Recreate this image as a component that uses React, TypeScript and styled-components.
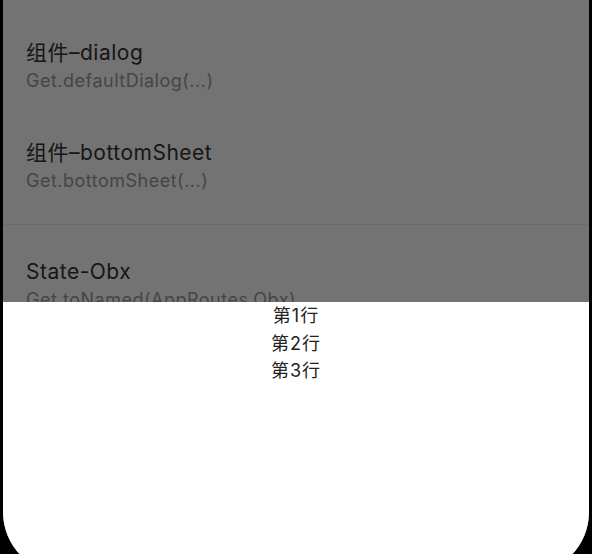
import React from "react";
import styled, { createGlobalStyle } from "styled-components";

const Global = createGlobalStyle`
  html, body {
    margin: 0;
    padding: 0;
    background: #000;
    overflow: hidden;
  }
  body {
    font-family: "Inter", "Noto Sans CJK SC", sans-serif;
  }
`;

const Screen = styled.div`
  position: relative;
  margin: 0 3px;
  height: 574px;
  background: #fff;
  border-radius: 0 0 62px 62px;
  overflow: hidden;
`;

const Section = styled.div<{ $top: number; $bottom: number }>`
  display: flex;
  flex-direction: column;
  padding-top: ${(p) => p.$top}px;
  padding-bottom: ${(p) => p.$bottom}px;
`;

const Item = styled.div`
  display: flex;
  flex-direction: column;
  height: 100px;
  box-sizing: border-box;
  padding: 25px 23px 0;
`;

const Title = styled.div`
  font-size: 21px;
  line-height: 28px;
  letter-spacing: 0.5px;
  color: #333;
  white-space: nowrap;
`;

const Subtitle = styled.div`
  margin-top: 1px;
  font-size: 18px;
  line-height: 26px;
  letter-spacing: 0.5px;
  color: #999;
  white-space: nowrap;
`;

const Divider = styled.div`
  height: 1px;
  background: #eee;
`;

const Overlay = styled.div`
  position: absolute;
  inset: 0;
  background: rgba(0, 0, 0, 0.55);
`;

const Sheet = styled.div`
  position: absolute;
  left: 0;
  right: 0;
  top: 302px;
  bottom: 0;
  background: #fff;
  display: flex;
  flex-direction: column;
  align-items: center;
`;

const SheetLine = styled.div`
  font-size: 18px;
  line-height: 27.5px;
  letter-spacing: 1px;
  color: #222;
`;

const items1 = [
  { title: "组件–dialog", sub: "Get.defaultDialog(...)" },
  { title: "组件–bottomSheet", sub: "Get.bottomSheet(...)" },
];
const items2 = [{ title: "State-Obx", sub: "Get.toNamed(AppRoutes.Obx)" }];

export default function App() {
  return (
    <>
      <Global />
      <Screen>
        <Section $top={14} $bottom={10}>
          {items1.map((it) => (
            <Item key={it.title}>
              <Title>{it.title}</Title>
              <Subtitle>{it.sub}</Subtitle>
            </Item>
          ))}
        </Section>
        <Divider />
        <Section $top={8} $bottom={0}>
          {items2.map((it) => (
            <Item key={it.title}>
              <Title>{it.title}</Title>
              <Subtitle>{it.sub}</Subtitle>
            </Item>
          ))}
        </Section>
        <Overlay />
        <Sheet>
          <SheetLine>第1行</SheetLine>
          <SheetLine>第2行</SheetLine>
          <SheetLine>第3行</SheetLine>
        </Sheet>
      </Screen>
    </>
  );
}
